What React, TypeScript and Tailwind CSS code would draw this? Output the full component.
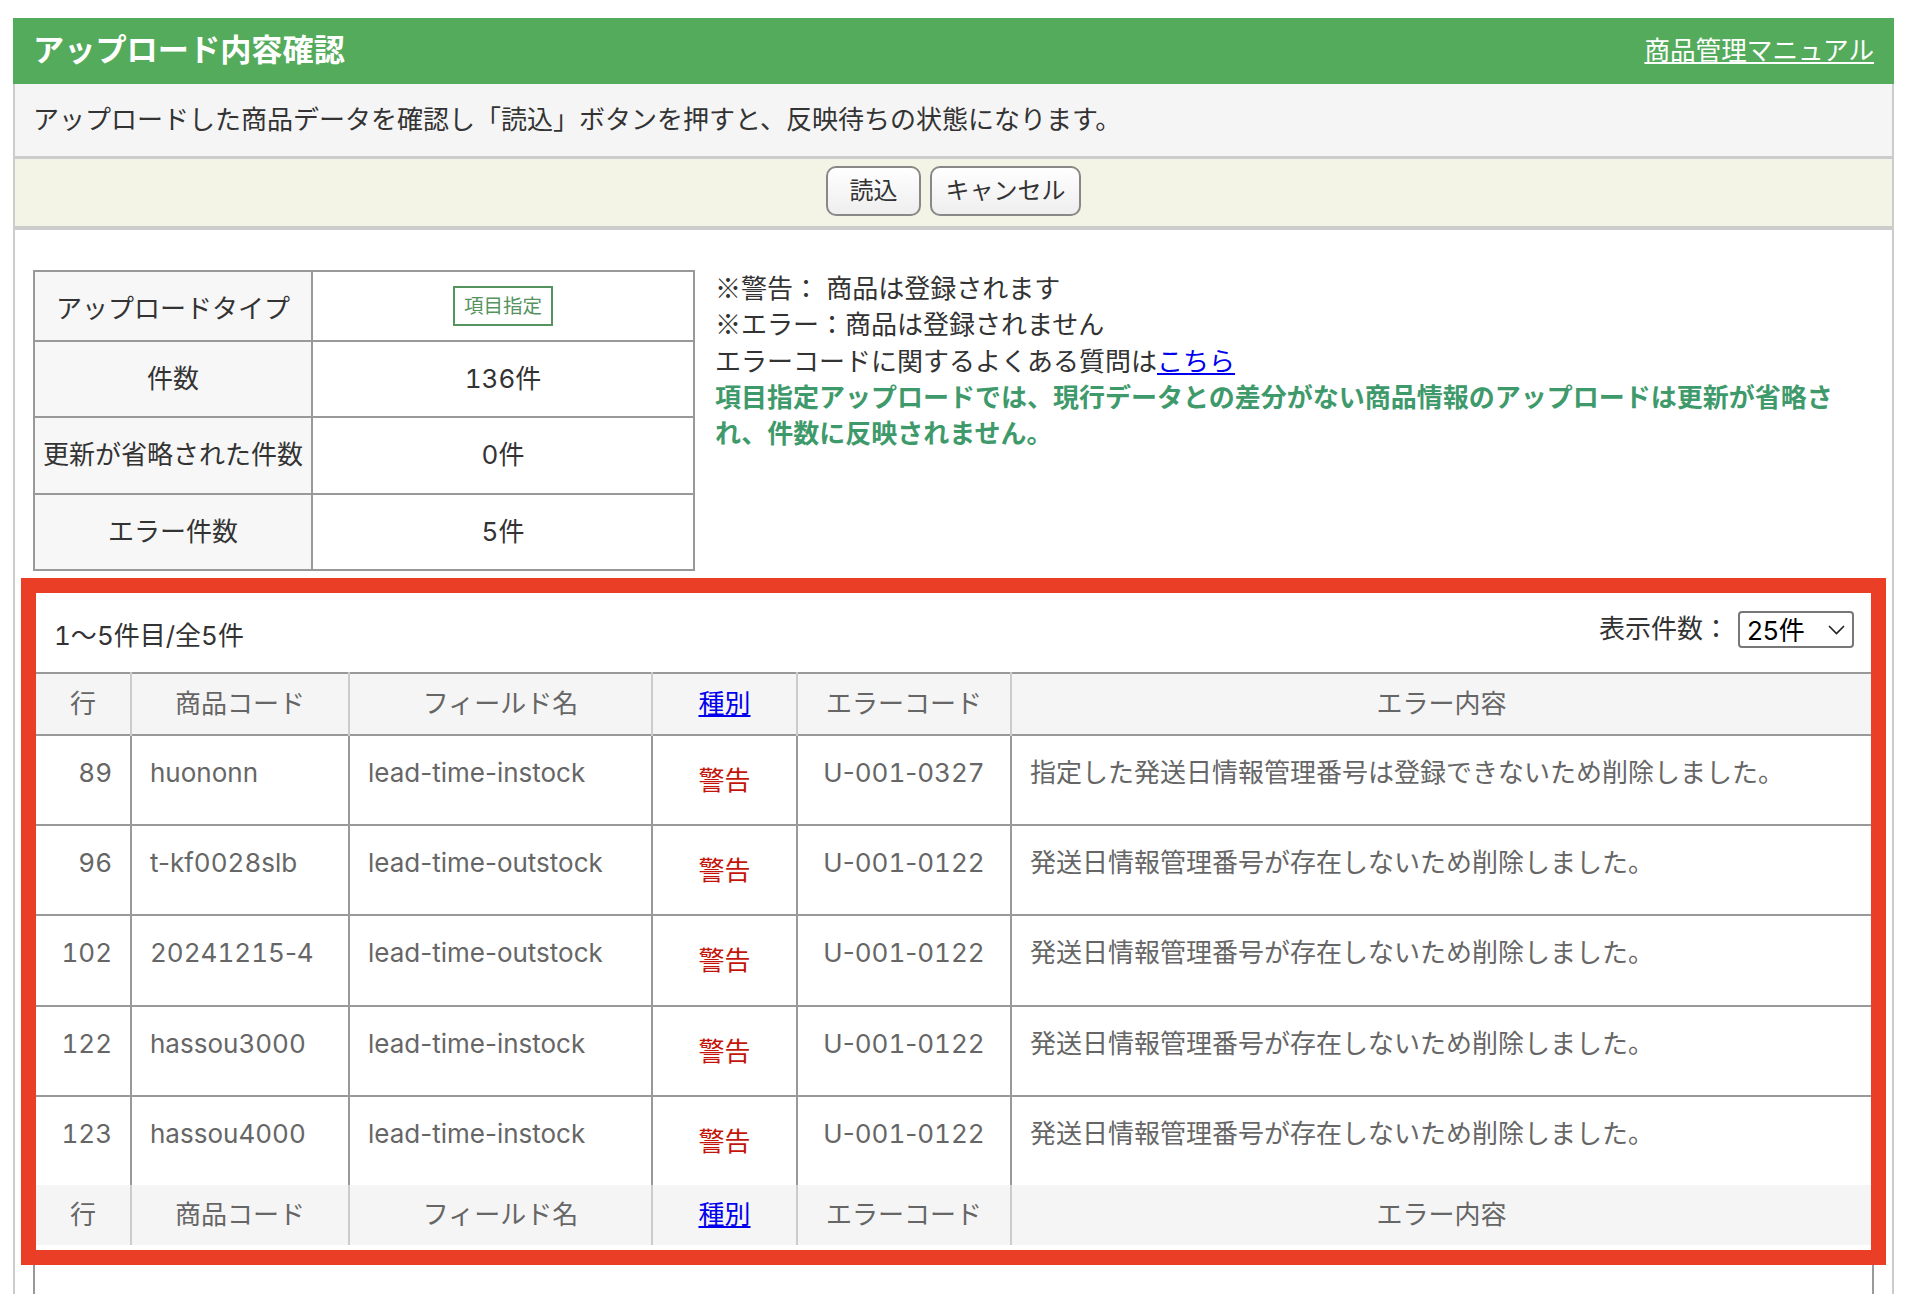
import React from 'react';

const rows = [
  { no: 89, code: 'huononn', field: 'lead-time-instock', err: 'U-001-0327', msg: '指定した発送日情報管理番号は登録できないため削除しました。', h: 'h-[90px]' },
  { no: 96, code: 't-kf0028slb', field: 'lead-time-outstock', err: 'U-001-0122', msg: '発送日情報管理番号が存在しないため削除しました。', h: 'h-[90px]' },
  { no: 102, code: '20241215-4', field: 'lead-time-outstock', err: 'U-001-0122', msg: '発送日情報管理番号が存在しないため削除しました。', h: 'h-[91px]' },
  { no: 122, code: 'hassou3000', field: 'lead-time-instock', err: 'U-001-0122', msg: '発送日情報管理番号が存在しないため削除しました。', h: 'h-[90px]' },
  { no: 123, code: 'hassou4000', field: 'lead-time-instock', err: 'U-001-0122', msg: '発送日情報管理番号が存在しないため削除しました。', h: 'h-[89px]' },
];

const summary = [
  { label: 'アップロードタイプ', value: null, h: 'h-[70px]' },
  { label: '件数', value: '136件', h: 'h-[76px]' },
  { label: '更新が省略された件数', value: '0件', h: 'h-[77px]' },
  { label: 'エラー件数', value: '5件', h: 'h-[76px]' },
];

// 数字だけ等幅にする（ハイフンまで広がらないように）
function Digits({ text }: { text: string }) {
  return (
    <>
      {text.split(/(\d+)/).map((part, i) =>
        /\d/.test(part) ? <span key={i} className="tabular-nums">{part}</span> : part
      )}
    </>
  );
}

function HeadRow({ className }: { className: string }) {
  const th = 'border-r-2 border-[#ccc] font-normal';
  return (
    <tr className={`bg-[#f5f5f5] text-[#666] text-center ${className}`}>
      <th className={th}>行</th>
      <th className={th}>商品コード</th>
      <th className={th}>フィールド名</th>
      <th className={th}><a href="#" className="text-[#0000ee] underline">種別</a></th>
      <th className={th}>エラーコード</th>
      <th className="font-normal">エラー内容</th>
    </tr>
  );
}

export default function App() {
  return (
    <div className="h-[1294px] overflow-hidden bg-white pt-[18px] pl-[13px] pr-[20px] font-['Inter','Noto_Sans_CJK_JP',sans-serif] text-[26px] leading-[36.3px] text-[#333]">
      <div className="flex h-[66px] items-center justify-between bg-[#55ab5c] pl-[20px] pr-[20px] text-white">
        <h1 className="pb-[2px] text-[31.2px] font-bold">アップロード内容確認</h1>
        <a href="#" className="text-[25.6px] underline">商品管理マニュアル</a>
      </div>

      <div className="border-x-2 border-[#ccc]">
        <p className="flex h-[72px] items-center bg-[#f5f5f5] pl-[18px]">
          アップロードした商品データを確認し「読込」ボタンを押すと、反映待ちの状態になります。
        </p>
        <div className="flex h-[74px] items-start justify-center gap-[9px] border-y-[3px] border-b-[4px] border-[#ccc] bg-[#f4f4e6] pt-[7px]">
          <button className="h-[50px] w-[95px] rounded-[10px] border-2 border-[#888] bg-gradient-to-b from-white to-[#eee] text-[24px]">読込</button>
          <button className="h-[50px] w-[151px] rounded-[10px] border-2 border-[#888] bg-gradient-to-b from-white to-[#eee] text-[24px]">キャンセル</button>
        </div>

        <div className="flex pt-[40px] pl-[18px]">
          <table className="w-[662px] shrink-0 table-fixed border-collapse border-2 border-[#999] text-center tabular-nums">
            <colgroup>
              <col className="w-[278px]" />
              <col />
            </colgroup>
            <tbody>
              {summary.map((r) => (
                <tr key={r.label} className={r.h}>
                  <th className={`border-2 border-[#999] bg-[#f7f7f7] font-normal ${r.value ? '' : 'pt-[6px]'}`}>{r.label}</th>
                  <td className="border-2 border-[#999]">
                    {r.value ?? (
                      <span className="inline-block border-2 border-[#55935f] px-[9px] text-[19.5px] leading-[36px] text-[#55935f]">項目指定</span>
                    )}
                  </td>
                </tr>
              ))}
            </tbody>
          </table>
          <div className="ml-[20px] mt-[1px] w-[1130px]">
            <p><span className="font-['Noto_Sans_CJK_JP',sans-serif] leading-none">※</span>警告： 商品は登録されます</p>
            <p><span className="font-['Noto_Sans_CJK_JP',sans-serif] leading-none">※</span>エラー：商品は登録されません</p>
            <p>エラーコードに関するよくある質問は<a href="#" className="text-[#0000ee] underline">こちら</a></p>
            <p className="font-bold text-[#3f9a6b]">項目指定アップロードでは、現行データとの差分がない商品情報のアップロードは更新が省略され、件数に反映されません。</p>
          </div>
        </div>

        <div className="mt-[7px] ml-[6px] mr-[6px] border-[15px] border-[#ea3f26] pb-[5px]">
          <div className="flex h-[79px] justify-between pl-[18px] pr-[17px]">
            <span className="mt-[25px]"><Digits text="1〜5件目/全5件" /></span>
            <div className="mt-[19px] flex h-[37px] items-center">
              <span className="mr-[9px] pb-[2px]">表示件数：</span>
              <div className="relative">
                <select className="h-[37px] w-[116px] appearance-none rounded-[4px] border-2 border-[#777] bg-white pb-[4px] pl-[7px] text-[26px] text-black">
                  <option>25件</option>
                </select>
                <svg className="absolute right-[9px] top-[14px]" width="17" height="10" viewBox="0 0 17 10" fill="none" stroke="#222" strokeWidth="1.6">
                  <polyline points="1,1 8.5,8.5 16,1" />
                </svg>
              </div>
            </div>
          </div>
          <table className="w-full table-fixed border-collapse text-[#666]">
            <colgroup>
              <col className="w-[95px]" />
              <col className="w-[218px]" />
              <col className="w-[303px]" />
              <col className="w-[145px]" />
              <col className="w-[214px]" />
              <col />
            </colgroup>
            <thead>
              <HeadRow className="h-[62px] border-y-2 border-[#999]" />
            </thead>
            <tbody>
              {rows.map((r, i) => (
                <tr key={r.no} className={`${r.h} align-top ${i < rows.length - 1 ? 'border-b-2 border-[#999]' : ''}`}>
                  <td className="border-r-2 border-[#999] pt-[19px] pr-[18px] text-right tabular-nums">{r.no}</td>
                  <td className="border-r-2 border-[#999] pt-[19px] pl-[18px]"><Digits text={r.code} /></td>
                  <td className="border-r-2 border-[#999] pt-[19px] pl-[18px]">{r.field}</td>
                  <td className="border-r-2 border-[#999] pt-[27px] text-center text-[#c4140a]">警告</td>
                  <td className="border-r-2 border-[#999] pt-[19px] text-center"><Digits text={r.err} /></td>
                  <td className="pt-[19px] pl-[18px]">{r.msg}</td>
                </tr>
              ))}
              <HeadRow className="h-[60px]" />
            </tbody>
          </table>
        </div>

        <div className="mx-[18px] h-[40px] border-x-2 border-[#999]" />
      </div>
    </div>
  );
}
